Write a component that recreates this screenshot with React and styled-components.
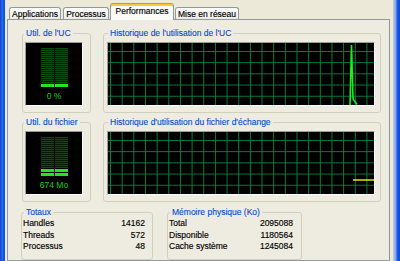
import React from 'react';
import styled, { createGlobalStyle } from 'styled-components';

const Global = createGlobalStyle`
  html, body { margin: 0; padding: 0; }
  body {
    width: 400px; height: 261px; overflow: hidden;
    background: #ECE9D8;
    font-family: "Liberation Sans", Arial, sans-serif;
  }
`;

const Window = styled.div`
  display: flex;
  width: 400px;
  height: 261px;
  overflow: hidden;
`;

const FrameLeft = styled.div`
  flex: none;
  width: 5px;
  background: linear-gradient(to right, #0A3DC8 0, #2A6BEA 2px, #1C5EE6 3px, #0B47D8 5px);
`;

const FrameRight = styled.div`
  flex: none;
  width: 7px;
  background: linear-gradient(to right, #C9D3E6 0, #A8BCEA 1px, #7E9FEB 3px, #1F5FE6 4px, #0A46D6 7px);
`;

const Content = styled.div`
  flex: 1;
  display: flex;
  flex-direction: column;
  padding: 3px 3px 0 2px;
  min-width: 0;
`;

const TabStrip = styled.div`
  display: flex;
  align-items: flex-end;
  height: 16px;
  padding-left: 2px;
  position: relative;
  z-index: 1;
`;

const Tab = styled.div`
  box-sizing: border-box;
  width: ${p => p.$w}px;
  margin-left: ${p => p.$ml}px;
  display: flex;
  align-items: center;
  justify-content: center;
  font-size: 8.5px;
  color: #000;
  white-space: nowrap;
  -webkit-text-stroke: 0.15px #000;
  border: 1px solid #919B9C;
  border-bottom: none;
  border-radius: 3px 3px 0 0;
  ${p => p.$active ? `
    height: 17px;
    margin-bottom: -1px;
    padding-bottom: 2px;
    background: #FBFBF8;
    border-top: 1px solid #E68B2C;
    box-shadow: inset 0 2px 0 #FFC83C;
  ` : `
    height: 12px;
    background: linear-gradient(to bottom, #FFFFFF, #ECEBE6);
  `}
`;

const Panel = styled.div`
  flex: 1;
  border: 1px solid #919B9C;
  border-right-color: #8C9596;
  background: #EEECE1;
  padding: 8px 8px 0 14px;
  display: flex;
  flex-direction: column;
`;

const TopGrid = styled.div`
  display: grid;
  grid-template-columns: 69px 278px;
  column-gap: 12px;
  row-gap: 4px;
`;

const Group = styled.fieldset`
  margin: 0;
  padding: 0;
  min-width: 0;
  border: 1px solid #D0D0BF;
  border-radius: 3px;
  box-sizing: border-box;
  width: ${p => (p.$w ? `${p.$w}px` : 'auto')};
`;

const Legend = styled.legend`
  margin-left: ${p => p.$indent}px;
  padding: 0 2px;
  font-size: 8.5px;
  line-height: 10px;
  color: #0046D5;
  white-space: nowrap;
  -webkit-text-stroke: 0.1px #0046D5;
`;

const MeterWell = styled.div`
  margin: 4px 7px 6px 2px;
  width: 56px;
  height: 62px;
  background: #000;
  border: 1px solid;
  border-color: #9D9D92 #FFFFFF #FFFFFF #9D9D92;
  display: flex;
  flex-direction: column;
  align-items: center;
`;

const Bars = styled.div`
  display: flex;
  gap: 1px;
  margin-top: 5px;
  height: 39px;
`;

const BarCol = styled.div`
  width: 13px;
  height: 100%;
  display: flex;
  flex-direction: column;
  justify-content: flex-end;
  background: repeating-linear-gradient(to bottom, #0B4E0B 0 1px, #031A03 1px 2px);
`;

const Lit = styled.div`
  background: repeating-linear-gradient(to top, #22E622 0 3px, #000 3px 4px);
`;

const MeterText = styled.div`
  margin-top: 4px;
  font-size: 8.5px;
  line-height: 10px;
  color: #16D016;
  white-space: nowrap;
`;

const GraphWell = styled.div`
  position: relative;
  margin: 4px 5px 6px 3px;
  height: 62px;
  background-color: #000;
  background-image:
    linear-gradient(to right, #008040 1px, transparent 1px),
    linear-gradient(to bottom, #008040 1px, transparent 1px);
  background-size: 11.67px 11.2px;
  background-position: 2px 8px;
  border: 1px solid;
  border-color: #9D9D92 #FFFFFF #FFFFFF #9D9D92;
`;

const GraphSvg = styled.svg`
  position: absolute;
  inset: 0;
  width: 100%;
  height: 100%;
  display: block;
`;

const BottomRow = styled.div`
  display: flex;
  gap: 14px;
  margin: 5px 0 0 -1px;
`;

const Stats = styled.div`
  padding: 1px ${p => p.$pr}px 6px 1px;
`;

const StatRow = styled.div`
  display: flex;
  justify-content: space-between;
  font-size: 8.5px;
  line-height: 11.5px;
  color: #000;
  white-space: nowrap;
  -webkit-text-stroke: 0.15px #000;
`;

function Meter({ lit, label }) {
  return (
    <MeterWell>
      <Bars>
        <BarCol><Lit style={{ height: lit }} /></BarCol>
        <BarCol><Lit style={{ height: lit }} /></BarCol>
      </Bars>
      <MeterText>{label}</MeterText>
    </MeterWell>
  );
}

function Graph({ children }) {
  return (
    <GraphWell>
      <GraphSvg viewBox="0 0 266 62" preserveAspectRatio="none">
        {children}
      </GraphSvg>
    </GraphWell>
  );
}

function StatGroup({ title, w, pr, rows }) {
  return (
    <Group $w={w}>
      <Legend $indent={2}>{title}</Legend>
      <Stats $pr={pr}>
        {rows.map(([k, v]) => (
          <StatRow key={k}><span>{k}</span><span>{v}</span></StatRow>
        ))}
      </Stats>
    </Group>
  );
}

export default function App() {
  return (
    <>
      <Global />
      <Window>
        <FrameLeft />
        <Content>
          <TabStrip>
            <Tab $w={52} $ml={0}>Applications</Tab>
            <Tab $w={46} $ml={2}>Processus</Tab>
            <Tab $w={64} $ml={1} $active>Performances</Tab>
            <Tab $w={64} $ml={1}>Mise en réseau</Tab>
          </TabStrip>
          <Panel>
            <TopGrid>
              <Group>
                <Legend $indent={1}>Util. de l'UC</Legend>
                <Meter lit={3} label="0 %" />
              </Group>
              <Group>
                <Legend $indent={4}>Historique de l'utilisation de l'UC</Legend>
                <Graph>
                  <polyline
                    points="242,62 243.5,2 245,56 249,61.5"
                    fill="none"
                    stroke="#19F019"
                    strokeWidth="1.6"
                  />
                </Graph>
              </Group>
              <Group>
                <Legend $indent={1}>Util. du fichier</Legend>
                <Meter lit={8} label="674 Mo" />
              </Group>
              <Group>
                <Legend $indent={4}>Historique d'utilisation du fichier d'échange</Legend>
                <Graph>
                  <line x1="245" y1="48" x2="266" y2="48" stroke="#E6E600" strokeWidth="1.5" />
                </Graph>
              </Group>
            </TopGrid>
            <BottomRow>
              <StatGroup
                title="Totaux"
                w={132}
                pr={7}
                rows={[['Handles', '14162'], ['Threads', '572'], ['Processus', '48']]}
              />
              <StatGroup
                title="Mémoire physique (Ko)"
                w={135}
                pr={8}
                rows={[['Total', '2095088'], ['Disponible', '1180564'], ['Cache système', '1245084']]}
              />
            </BottomRow>
          </Panel>
        </Content>
        <FrameRight />
      </Window>
    </>
  );
}
